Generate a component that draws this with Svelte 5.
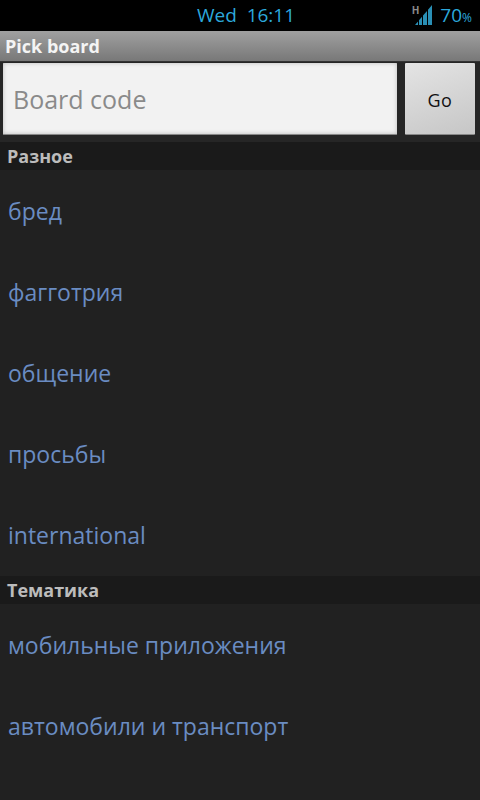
<script>
  const sections = [
    { title: "Разное", boards: ["бред", "фагготрия", "общение", "просьбы", "international"] },
    { title: "Тематика", boards: ["мобильные приложения", "автомобили и транспорт"] },
  ];
</script>

<div class="screen">
  <div class="statusbar">
    <span class="clock">Wed&nbsp; 16:11</span>
    <div class="status-right">
      <span class="net">H</span>
      <svg class="signal" width="17" height="20" viewBox="0 0 17 20">
        <path d="M0 20l3-3.500V20zM4 20v-4.700l3-3.500V20zM8 20V10.600l4-4.700V20zM13 20V4.700L17 0V20z" fill="#2a8fb5" />
      </svg>
      <span class="battery">70<small>%</small></span>
    </div>
  </div>
  <div class="titlebar">Pick board</div>
  <div class="searchrow">
    <input class="code" type="text" placeholder="Board code" />
    <button class="go">Go</button>
  </div>
  {#each sections as section}
    <section class="group">
      <div class="header">{section.title}</div>
      {#each section.boards as board}
        <div class="board">{board}</div>
      {/each}
    </section>
  {/each}
</div>

<style>
  :global(body) {
    background: #212121;
    overflow: hidden;
  }
  .screen {
    width: 480px;
    height: 800px;
    overflow: hidden;
    background: #212121;
    font-family: "Open Sans", "Noto Sans", sans-serif;
  }
  .statusbar {
    height: 31px;
    background: #000;
    display: flex;
    align-items: center;
    justify-content: center;
    position: relative;
    color: #2ca9dc;
  }
  .clock {
    font-size: 19px;
    margin: 0 0 2px 12px;
  }
  .status-right {
    position: absolute;
    right: 8px;
    top: 0;
    height: 31px;
    display: flex;
    align-items: center;
  }
  .net {
    font-size: 10px;
    font-weight: 700;
    color: #8a8a8a;
    align-self: flex-start;
    margin: 3px -4px 0 0;
  }
  .signal {
    margin: 0 8px 1px 0;
  }
  .battery {
    font-size: 19px;
    margin-bottom: 1px;
  }
  .battery small {
    font-size: 12px;
  }
  .titlebar {
    height: 31px;
    box-sizing: border-box;
    padding-left: 5px;
    line-height: 30px;
    font-size: 18px;
    font-weight: 700;
    color: #f4f4f4;
    border-bottom: 1px solid #333;
    background: linear-gradient(#a0a0a0, #787878);
  }
  .searchrow {
    display: flex;
    height: 80px;
    box-sizing: border-box;
    padding: 1px 5px 7px 3px;
    gap: 8px;
    background: #262626;
  }
  .code {
    flex: 1;
    min-width: 0;
    box-sizing: border-box;
    border: 0;
    border-bottom: 1px solid #888;
    border-radius: 1px;
    padding: 1px 10px 0;
    font-family: inherit;
    font-size: 25px;
    background: #f2f2f2;
    box-shadow: inset 0 0 4px #bbb;
  }
  .code::placeholder {
    color: #8a8a8a;
    opacity: 1;
  }
  .go {
    width: 70px;
    padding: 2px 0 0;
    border: 0;
    border-bottom: 1px solid #888;
    border-radius: 1px;
    font-family: inherit;
    font-size: 18px;
    letter-spacing: 0.5px;
    color: #111;
    background: linear-gradient(160deg, #e4e4e4, #c6c6c6);
  }
  .group {
    padding-bottom: 1px;
  }
  .header {
    height: 28px;
    box-sizing: border-box;
    padding-left: 7px;
    line-height: 28px;
    font-size: 18px;
    font-weight: 700;
    color: #bcbcbc;
    background: #1a1a1a;
  }
  .board {
    height: 81px;
    box-sizing: border-box;
    padding-left: 8px;
    line-height: 82px;
    font-size: 23px;
    color: #6a8cc2;
  }
</style>
